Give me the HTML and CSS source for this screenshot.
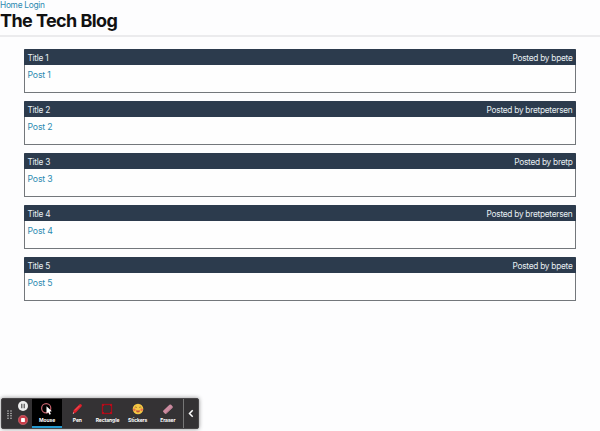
FILE: index.html
```html
<!DOCTYPE html>
<html lang="en">
<head>
<meta charset="utf-8">
<title>The Tech Blog</title>
<link rel="stylesheet" href="styles.css">
</head>
<body>
<header class="site-header">
  <nav class="nav"><a>Home</a> <a>Login</a></nav>
  <h1>The Tech Blog</h1>
</header>
<main class="posts">
  <article class="post"><div class="post-head"><span>Title 1</span><span>Posted by bpete</span></div><a class="post-body">Post 1</a></article>
  <article class="post"><div class="post-head"><span>Title 2</span><span>Posted by bretpetersen</span></div><a class="post-body">Post 2</a></article>
  <article class="post"><div class="post-head"><span>Title 3</span><span>Posted by bretp</span></div><a class="post-body">Post 3</a></article>
  <article class="post"><div class="post-head"><span>Title 4</span><span>Posted by bretpetersen</span></div><a class="post-body">Post 4</a></article>
  <article class="post"><div class="post-head"><span>Title 5</span><span>Posted by bpete</span></div><a class="post-body">Post 5</a></article>
</main>
<div class="toolbar">
  <svg class="grip" viewBox="0 0 5 9"><g fill="#ccc"><circle cx="1" cy="1" r=".75"/><circle cx="4" cy="1" r=".75"/><circle cx="1" cy="3.4" r=".75"/><circle cx="4" cy="3.4" r=".75"/><circle cx="1" cy="5.8" r=".75"/><circle cx="4" cy="5.8" r=".75"/><circle cx="1" cy="8.2" r=".75"/><circle cx="4" cy="8.2" r=".75"/></g></svg>
  <div class="controls">
    <svg viewBox="0 0 10 10"><circle cx="5" cy="5" r="5" fill="#eee"/><path d="M3.8 2.7v4.6M6.2 2.7v4.6" stroke="#444" stroke-width="1.1"/></svg>
    <svg viewBox="0 0 10 10"><circle cx="5" cy="5" r="4.7" fill="#c93d49" stroke="#d0707a" stroke-width=".6"/><rect x="3.1" y="3.1" width="3.8" height="3.8" rx=".4" fill="#fff"/></svg>
  </div>
  <div class="tool active"><svg viewBox="0 0 14 14"><circle cx="6.2" cy="6.3" r="4.6" fill="none" stroke="#c4606b" stroke-width="1.2"/><path d="M6.5 4.2v7.4l1.7-1.5 1.3 2.7 1.4-.7-1.3-2.6 2.3-.2z" fill="#fff"/></svg><span>Mouse</span></div>
  <div class="tool"><svg viewBox="0 0 14 14"><path d="M2.8 11.8l.9-3.8 5.6-5.5q1-.9 2.1.1t.1 2L5.9 10.4z" fill="#df202b"/><path d="M5 8.4l4.5-4.5" stroke="#f27b80" stroke-width=".7"/><path d="M2.8 11.8l.4-1.5 1 1z" fill="#eee"/></svg><span>Pen</span></div>
  <div class="tool"><svg viewBox="0 0 14 14"><rect x="2.5" y="2.5" width="9" height="9" fill="none" stroke="#a80b19" stroke-width="1.3"/><g fill="#b80c1b"><path d="M2 2h2v2H2zM10 2h2v2h-2zM2 10h2v2H2zM10 10h2v2h-2z"/></g></svg><span>Rectangle</span></div>
  <div class="tool"><svg viewBox="0 0 14 14"><circle cx="7" cy="7" r="5.3" fill="#f3c643"/><path d="M3.7 5.6q1.1-1.3 2.2 0M8.1 5.6q1.1-1.3 2.2 0" fill="none" stroke="#8b572c" stroke-width=".7"/><path d="M4.8 8.5h4.4q-.4 1.9-2.2 1.9t-2.2-1.9z" fill="#c4513a"/><g fill="#ec6e4d"><circle cx="3.3" cy="7.8" r="1.2"/><circle cx="10.7" cy="7.8" r="1.2"/></g></svg><span>Stickers</span></div>
  <div class="tool"><svg viewBox="0 0 14 14"><g transform="rotate(-43 7 7)"><rect x="1.5" y="4.9" width="10.6" height="4.4" rx="1.2" fill="#cc8ba0"/><path d="M2.6 8.8h8.5" stroke="#a76b80" stroke-width=".7"/></g></svg><span>Eraser</span></div>
  <div class="collapse"><svg viewBox="0 0 6 9"><path d="M4.7 1.2L1.5 4.5l3.2 3.3" fill="none" stroke="#fff" stroke-width="1.5"/></svg></div>
</div>
</body>
</html>
```
FILE: styles.css
```css
* { box-sizing: border-box; }
body {
  margin: 0;
  height: 431px;
  overflow: hidden;
  background: #fdfdfe;
  color: #111;
  font: 8.3px/10px Inter, "Liberation Sans", sans-serif;
  letter-spacing: -.26px;
}
a { color: #2b8ab0; }
.site-header { height: 37px; border-bottom: 2px solid #ebebed; }
.nav { height: 10px; }
h1 { margin: 0; font-size: 18px; line-height: 22px; font-weight: 700; letter-spacing: -.58px; }
.posts { display: flex; flex-direction: column; gap: 7.9px; padding: 12px 24px 0; }
.post { height: 44px; border: 1px solid #73777b; border-top-color: #2c3b4d; background: #fefefe; }
.post-head {
  display: flex;
  justify-content: space-between;
  height: 15px;
  margin: 0 -1px;
  padding: 0 3.5px;
  background: #2c3b4d;
  color: #e8eff3;
  line-height: 16px;
}
.post-body { display: block; padding: 5px 2.5px; font-size: 8.7px; letter-spacing: -.15px; }
.toolbar {
  position: absolute;
  left: 1px;
  top: 398px;
  display: flex;
  width: 198px;
  height: 31px;
  border: 1px solid #484648;
  border-radius: 2px;
  background: #343234;
  box-shadow: 0 0 4px rgba(0, 0, 0, .45);
  letter-spacing: 0;
}
.grip { width: 5px; height: 9px; margin: 11px 6px 0 5px; }
.controls { display: flex; flex-direction: column; gap: 4px; width: 14px; padding-top: 2px; }
.controls svg { width: 10px; height: 10px; }
.tool {
  display: flex;
  flex-direction: column;
  align-items: center;
  width: 30.2px;
  padding-top: 3px;
  color: #fff;
  font-size: 5px;
  font-weight: 700;
  letter-spacing: -.1px;
  line-height: 7px;
}
.tool svg { width: 14px; height: 14px; margin-bottom: 1px; }
.active { background: #000; border-bottom: 2px solid #249ad0; }
.collapse { display: flex; flex: 1; align-items: center; justify-content: center; border-left: 1px solid #777; }
.collapse svg { width: 6px; height: 9px; }
```
